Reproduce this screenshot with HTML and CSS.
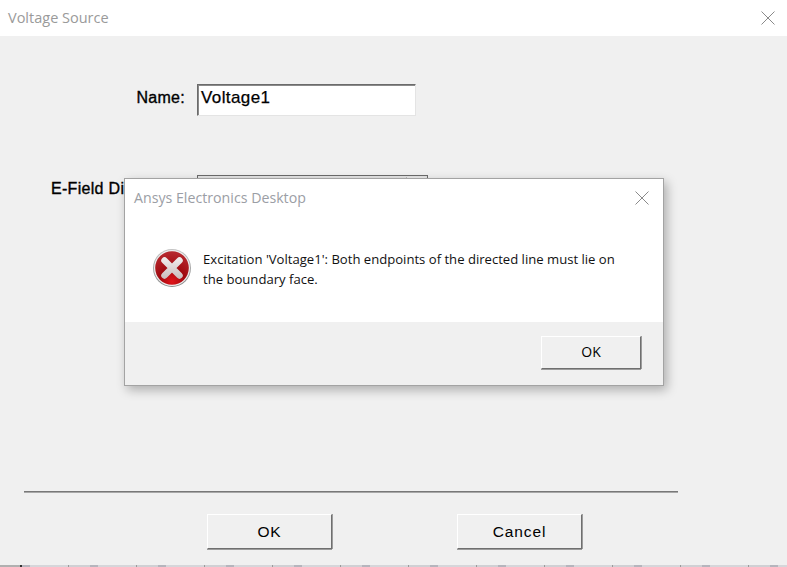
FILE: index.html
```html
<!DOCTYPE html>
<html lang="en">
<head>
<meta charset="utf-8">
<title>Voltage Source</title>
<link rel="stylesheet" href="styles.css">
</head>
<body>
<div class="window">
  <header class="titlebar">
    <span class="title">Voltage Source</span>
    <svg class="close" width="14" height="14" viewBox="0 0 14 14"><path d="M.5.5l13 13M13.500.5l-13 13" stroke="#8a8a8a" fill="none"/></svg>
  </header>
  <main class="content">
    <div class="row row-name">
      <label class="label">Name:</label>
      <div class="input">Voltage1</div>
    </div>
    <div class="row row-field">
      <label class="label label-field">E-Field Di</label>
      <div class="combo"><span class="combo-btn"></span></div>
    </div>
    <div class="spacer"></div>
    <hr class="separator">
    <div class="actions">
      <button class="btn">OK</button>
      <button class="btn">Cancel</button>
    </div>
  </main>
  <div class="strip"></div>
</div>

<div class="dialog">
  <div class="dialog-main">
    <div class="dialog-title">
      <span>Ansys Electronics Desktop</span>
      <svg class="dialog-close" width="14" height="14" viewBox="0 0 14 14"><path d="M.5.5l13 13M13.500.5l-13 13" stroke="#8a8a8a" fill="none"/></svg>
    </div>
    <div class="dialog-body">
      <svg class="err" width="40" height="40" viewBox="0 0 40 40">
        <defs>
          <linearGradient id="ring" x1="0" y1="0" x2="0" y2="1">
            <stop offset="0" stop-color="#c4c4c4"/>
            <stop offset="1" stop-color="#8a8a8a"/>
          </linearGradient>
          <radialGradient id="red" cx=".5" cy=".9" r=".85">
            <stop offset="0" stop-color="#e0141a"/>
            <stop offset=".45" stop-color="#a0090f"/>
            <stop offset="1" stop-color="#b5282e"/>
          </radialGradient>
          <linearGradient id="xfill" gradientUnits="userSpaceOnUse" x1="0" y1="9" x2="0" y2="31">
            <stop offset="0" stop-color="#f2eeee"/>
            <stop offset="1" stop-color="#c9bcbc"/>
          </linearGradient>
        </defs>
        <circle cx="20" cy="20" r="19" fill="url(#ring)"/>
        <circle cx="20" cy="20" r="18" fill="#eeeeee"/>
        <circle cx="20" cy="20" r="16.800" fill="url(#red)"/>
        <path d="M12.500 12.500l15 15M27.500 12.500l-15 15" stroke="url(#xfill)" stroke-width="6.500" stroke-linecap="round" fill="none"/>
      </svg>
      <p class="message">Excitation 'Voltage1': Both endpoints of the directed line must lie on the boundary face.</p>
    </div>
  </div>
  <div class="dialog-footer">
    <button class="dialog-btn">OK</button>
  </div>
</div>
</body>
</html>
```
FILE: styles.css
```css
* { box-sizing: border-box; }
html, body { margin: 0; height: 100%; overflow: hidden; }
body { background: #f0f0f0; font-family: "Liberation Sans", Arial, sans-serif; color: #000; }

.window { width: 787px; height: 567px; display: flex; flex-direction: column; background: #f0f0f0; }
.titlebar { height: 36px; flex: none; background: #fff; display: flex; align-items: center; justify-content: space-between; padding: 0 12px 2px 8px; }
.title { font: 14.500px "Open Sans", sans-serif; color: #9a9a9a; }
.close { display: block; margin-top: 1px; }

.content { flex: 1; display: flex; flex-direction: column; padding: 48px 109px 0 24px; }
.row { display: flex; align-items: center; }
.row-field { margin-top: 59px; }
.label { font-size: 16px; letter-spacing: .3px; -webkit-text-stroke: .35px #000; width: 173px; padding: 0 12px 4px 0; text-align: right; white-space: nowrap; }
.label-field { text-align: left; padding-left: 27px; }
.input { width: 219px; height: 32px; background: #fff; font-size: 17px; line-height: 25px; letter-spacing: .4px; padding-left: 3px; -webkit-text-stroke: .25px #000; border: 1px solid; border-color: #6b6b6b #e4e4e4 #e4e4e4 #6b6b6b; box-shadow: inset 0 1px 0 #8a8a8a, inset 1px 0 0 #8a8a8a; }
.combo { width: 231px; height: 32px; background: #e4e4e4; border: 1px solid #6b6b6b; display: flex; justify-content: flex-end; padding: 1px; }
.combo-btn { width: 20px; background: #ececec; border-left: 1px solid #bdbdbd; }
.spacer { flex: 1; }
.separator { width: 654px; height: 2px; margin: 0; border: 0; background: #787878; border-bottom: 1px solid #a8a8a8; }
.actions { display: flex; gap: 125px; padding: 21px 0 16px 183px; }
.btn { width: 125px; height: 35px; padding: 0; background: #f0f0f0; color: #000; font: 15.500px "Liberation Sans", Arial, sans-serif; letter-spacing: .9px; border: 1px solid; border-color: #fff #6f6f6f #6f6f6f #fff; box-shadow: 0 1px 0 #9c9c9c, 1px 0 0 #9c9c9c; }
.strip { height: 2px; flex: none; background: linear-gradient(90deg, #b0b0b0 0 20px, #333 20px 22px, transparent 22px), repeating-linear-gradient(90deg, #9a9a9a 0 1px, #d0d0d4 1px 22px, #b5b5bd 22px 30px, #d6d6da 30px 68px); }

.dialog { position: absolute; left: 124px; top: 178px; width: 540px; height: 208px; display: flex; flex-direction: column; background: #fff; border: 1px solid #a3a3a3; box-shadow: 3px 4px 10px rgba(0, 0, 0, .28); font-family: "Open Sans", sans-serif; }
.dialog-main { flex: 1; display: flex; flex-direction: column; background: #fff; }
.dialog-title { height: 38px; display: flex; align-items: center; justify-content: space-between; padding: 0 14px 2px 9px; font-size: 14.200px; color: #9b9ea5; }
.dialog-close { display: block; margin-top: 2px; }
.dialog-body { display: flex; align-items: flex-start; padding: 31px 24px 0 27px; }
.err { flex: none; }
.message { margin: 0 0 0 11px; padding-top: 1px; width: 425px; font: 13.100px/20px "Open Sans", sans-serif; color: #111; }
.dialog-footer { height: 63px; flex: none; background: #f0f0f0; display: flex; justify-content: flex-end; padding: 14px 22px 0 0; align-items: flex-start; }
.dialog-btn { width: 100px; height: 33px; padding: 0 0 2px; background: #f0f0f0; color: #000; font: 14px "Open Sans", sans-serif; border: 1px solid; border-color: #fff #6f6f6f #6f6f6f #fff; box-shadow: 0 1px 0 #9c9c9c, 1px 0 0 #9c9c9c; }
```
